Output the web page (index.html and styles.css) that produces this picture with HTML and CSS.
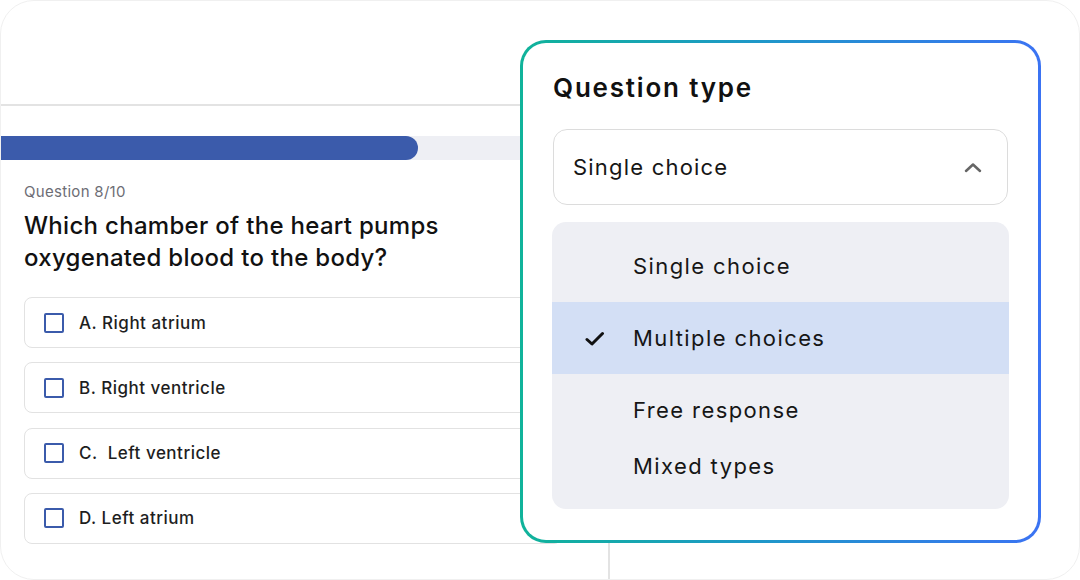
FILE: index.html
```html
<!DOCTYPE html>
<html lang="en">
<head>
    <meta charset="UTF-8">
    <title>Question type</title>
    <link rel="stylesheet" href="styles.css">
</head>
<body>
    <div class="frame">
        <!-- quiz panel behind the popup -->
        <div class="quiz">
            <div class="progress"><div class="progress-fill" style="width: 418px"></div></div>
            <div class="quiz-body">
                <div class="q-count">Question 8/10</div>
                <h2 class="q-title">Which chamber of the heart pumps<br>oxygenated blood to the body?</h2>
                <div class="options">
                    <label class="option"><span class="box"></span>A. Right atrium</label>
                    <label class="option"><span class="box"></span>B. Right ventricle</label>
                    <label class="option"><span class="box"></span>C.&nbsp; Left ventricle</label>
                    <label class="option"><span class="box"></span>D. Left atrium</label>
                </div>
            </div>
        </div>

        <!-- question type popup -->
        <div class="popup">
            <h3 class="popup-title">Question type</h3>
            <div class="select">
                <span>Single choice</span>
                <svg class="chevron" width="18" height="11" viewBox="0 0 18 11">
                    <path d="M2 9 L9 2.5 L16 9" fill="none" stroke="#666" stroke-width="2.5" stroke-linecap="round" stroke-linejoin="round"/>
                </svg>
            </div>
            <ul class="menu">
                <li class="item">Single choice</li>
                <li class="item active">
                    <svg class="check" width="20" height="16" viewBox="0 0 20 16">
                        <path d="M2 8.5 L7 13 L17.5 2.5" fill="none" stroke="#111" stroke-width="3" stroke-linecap="round" stroke-linejoin="round"/>
                    </svg>
                    Multiple choices
                </li>
                <li class="item">Free response</li>
                <li class="item last">Mixed types</li>
            </ul>
        </div>
    </div>
</body>
</html>
```

FILE: styles.css
```css
* {
    box-sizing: border-box;
}

body {
    margin: 0;
    background: #fff;
    font-family: Inter, "Noto Sans", sans-serif;
    color: #161616;
}

.frame {
    position: relative;
    width: 1080px;
    height: 580px;
    border: 1px solid #f0f0f0;
    border-radius: 34px;
    overflow: hidden;
    background: #fff;
}

/* 左侧题目面板 */
.quiz {
    width: 610px;
    height: 476px;
    margin-top: 103px;
    margin-left: -1px;
    padding-top: 30px;
    border-top: 2px solid #e3e3e3;
    border-right: 2px solid #e3e3e3;
}

.progress {
    height: 24px;
    background: #eeeff4;
}

.progress-fill {
    height: 100%;
    background: #3b5bab;
    border-radius: 0 12px 12px 0;
}

.quiz-body {
    padding: 22px 0 0 24px;
}

.q-count {
    font-size: 15px;
    line-height: 20px;
    letter-spacing: 0.3px;
    color: #6d6d75;
}

.q-title {
    margin: 8px 0 0;
    font-size: 24px;
    line-height: 32px;
    font-weight: 500;
    letter-spacing: 0.3px;
    color: #111;
}

.options {
    margin-top: 23px;
    display: flex;
    flex-direction: column;
    gap: 14.33px;
}

.option {
    display: flex;
    align-items: center;
    gap: 15px;
    width: 538px;
    height: 51px;
    padding-left: 19px;
    border: 1px solid #e2e2e2;
    border-radius: 8px;
    font-size: 17px;
    font-weight: 500;
    letter-spacing: 0.5px;
    color: #1e1e1e;
}

.box {
    width: 20px;
    height: 20px;
    border: 2px solid #3b5bab;
    border-radius: 2px;
}

/* 弹出选择框 */
.popup {
    position: absolute;
    left: 519px;
    top: 39px;
    width: 521px;
    height: 503px;
    padding: 29px 30px 0;
    border: 3px solid transparent;
    border-radius: 26px;
    background:
        linear-gradient(#fff, #fff) padding-box,
        linear-gradient(90deg, #10b39a 0%, #1e98c8 45%, #3b73f3 100%) border-box;
}

.popup-title {
    margin: 0;
    font-size: 26px;
    line-height: 32px;
    font-weight: 600;
    letter-spacing: 1.8px;
    color: #111;
}

.select {
    margin-top: 25px;
    height: 76px;
    display: flex;
    align-items: center;
    justify-content: space-between;
    padding: 0 25px 0 19px;
    border: 1px solid #dcdcdc;
    border-radius: 14px;
    font-size: 22px;
    letter-spacing: 1.2px;
}

.menu {
    list-style: none;
    margin: 17px -1px 0;
    padding: 8px 0 23px;
    background: #eeeff4;
    border-radius: 14px;
}

.item {
    position: relative;
    height: 72px;
    display: flex;
    align-items: center;
    padding-left: 81px;
    font-size: 22px;
    letter-spacing: 1.4px;
    color: #161616;
}

.item.active {
    background: #d3dff5;
}

.item.last {
    height: 40px;
}

.check {
    position: absolute;
    left: 33px;
    top: 29px;
}
```
